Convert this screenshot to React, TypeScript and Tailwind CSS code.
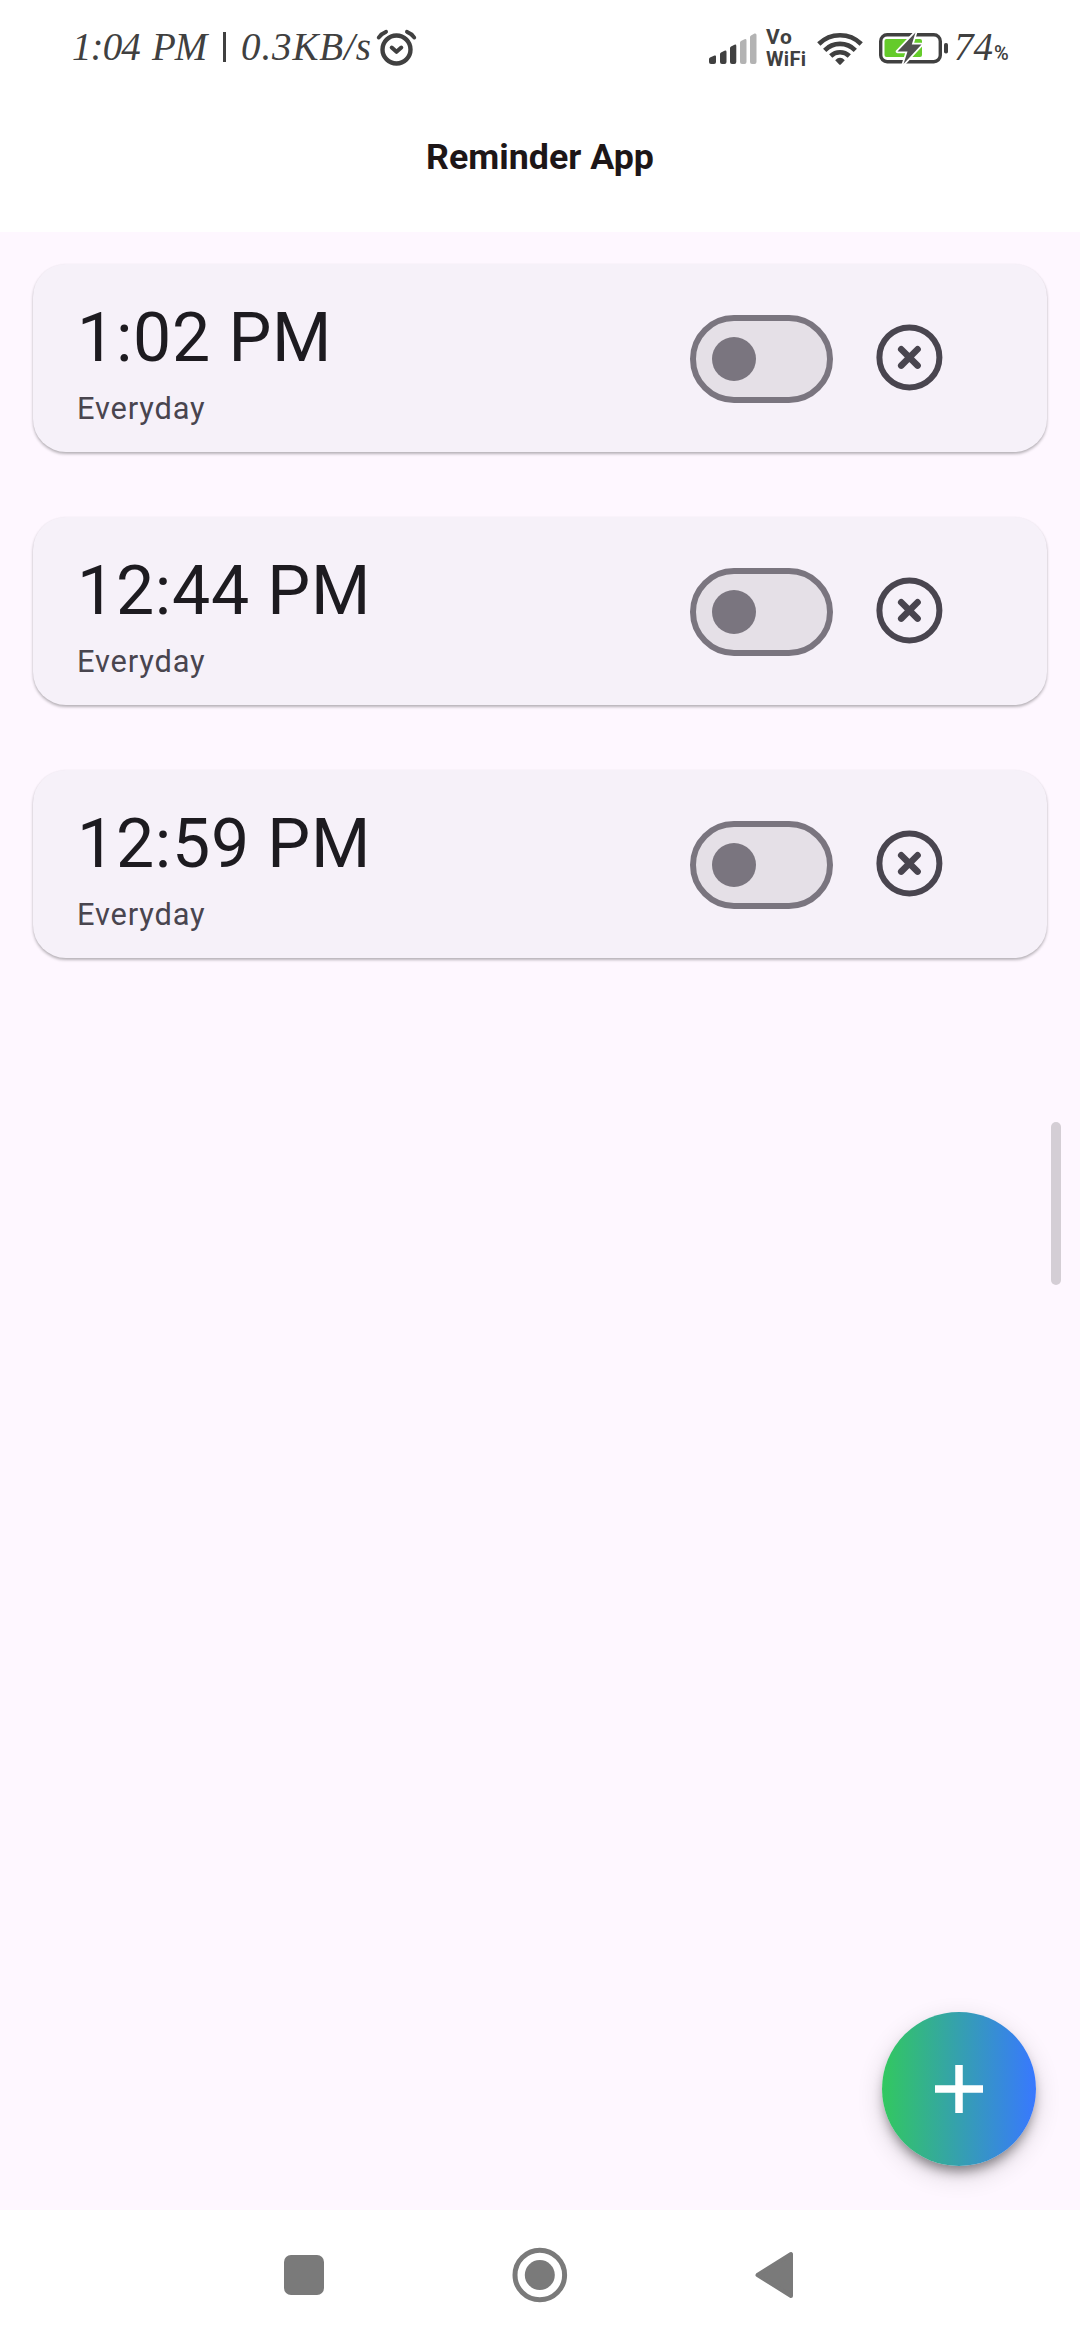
import React from "react";

const reminders = [
  { time: "1:02 PM", repeat: "Everyday" },
  { time: "12:44 PM", repeat: "Everyday" },
  { time: "12:59 PM", repeat: "Everyday" },
];

function AlarmIcon() {
  return (
    <svg className="mt-[27px] ml-[5px] h-[40px] w-[42px] shrink-0" viewBox="0 0 42 40" fill="none" stroke="#404040" strokeLinecap="round" strokeLinejoin="round">
      <circle cx="21.5" cy="22.5" r="14" strokeWidth="4.4" />
      <path d="M16.7 20.5 L21.5 24.8 L26.3 20.5" strokeWidth="4" />
      <path d="M3.800 10.500 Q6.500 6.500 11 4.800 M39.200 10.500 Q36.500 6.500 32 4.800" strokeWidth="4" />
    </svg>
  );
}

function SignalIcon() {
  return (
    <svg className="mt-[33px] h-[32px] w-[48px] shrink-0" viewBox="0 0 48 32">
      <g fill="#404040">
        <path d="M0 26 Q0 25 1 24.5 L5.5 22.5 Q7 22 7 23.5 V29 Q7 31 5 31 H2 Q0 31 0 29Z" />
        <path d="M11 21 Q11 20 12 19.5 L15.5 17.7 Q17.500 17 17.500 19 V29 Q17.500 31 15.500 31 H13 Q11 31 11 29Z" />
        <path d="M21 15 Q21 14 22 13.500 L25.500 11.700 Q27.300 11 27.300 13 V29 Q27.300 31 25.300 31 H23 Q21 31 21 29Z" />
      </g>
      <g fill="#b3b3b3">
        <path d="M31 9.500 Q31 8.500 32 8 L35.500 6.200 Q37.500 5.500 37.500 7.500 V29 Q37.500 31 35.500 31 H33 Q31 31 31 29Z" />
        <path d="M41 4 Q41 3 42 2.500 L45.500 .5 Q47.500 0 47.500 2 V29 Q47.500 31 45.500 31 H43 Q41 31 41 29Z" />
      </g>
    </svg>
  );
}

function VoWifi() {
  return (
    <div className="mt-[26px] ml-[9px] flex w-[43px] shrink-0 flex-col font-['Roboto',sans-serif] font-bold text-[#404040]">
      <span className="h-[22px] text-[21px] leading-[22px] tracking-[0.8px]">Vo</span>
      <span className="h-[22px] text-[20px] leading-[22px] tracking-[0.3px]">WiFi</span>
    </div>
  );
}

function WifiIcon() {
  return (
    <svg className="mt-[30px] ml-[7px] h-[36px] w-[48px] shrink-0" viewBox="0 0 48 36" fill="none" stroke="#404040" strokeWidth="4.600">
      <path d="M2.800 14 A30 30 0 0 1 45.200 14" />
      <path d="M8.700 20.300 A21.500 21.500 0 0 1 39.300 20.300" />
      <path d="M14.700 26 A13.500 13.500 0 0 1 33.300 26" />
      <path d="M19.200 30.300 Q24 25.400 28.800 30.300 L24.800 34.500 Q24 35.200 23.200 34.500Z" fill="#404040" stroke="none" />
    </svg>
  );
}

function BatteryIcon() {
  return (
    <svg className="mt-[31px] ml-[15px] h-[34px] w-[70px] shrink-0" viewBox="0 0 70 34">
      <rect x="1.700" y="3.700" width="59.600" height="27" rx="6.500" fill="none" stroke="#404040" strokeWidth="3.400" />
      <rect x="5.500" y="8" width="37.500" height="18" rx="2" fill="#65cb2b" />
      <path d="M36.500 1.500 L18.500 20.500 H28.500 L24.500 33 L42.500 13.500 H32.800 Z" fill="#505050" stroke="#fff" strokeWidth="3.500" strokeLinejoin="round" paintOrder="stroke" />
      <rect x="65" y="12" width="4" height="10.500" rx="1.800" fill="#404040" />
    </svg>
  );
}

function StatusBar() {
  return (
    <div className="flex h-[94px] shrink-0 items-start text-[#404040]">
      <div className="flex h-[94px] w-[300px] shrink-0 whitespace-nowrap pl-[72px] font-['Liberation_Serif',serif] text-[39px] leading-[94px] italic">
        <span className="w-[80px] shrink-0 tracking-[-0.9px]">1:04</span>
        <span className="w-[71px] shrink-0 tracking-[-1px]">PM</span>
        <span className="mt-[32px] mr-[15px] h-[30px] w-[3px] shrink-0 bg-[#404040]" />
        <span className="shrink-0 tracking-[0.9px]">0.3KB/s</span>
      </div>
      <div className="ml-[70px] flex">
        <AlarmIcon />
      </div>
      <div className="ml-auto flex pr-[66px]">
        <SignalIcon />
        <VoWifi />
        <WifiIcon />
        <BatteryIcon />
        <span className="ml-[5px] w-[37px] font-['Liberation_Serif',serif] text-[39px] leading-[94px] italic">74</span>
        <span className="mt-[6px] w-[23px] pl-[3px] font-['Roboto',sans-serif] text-[20px] leading-[94px] font-medium">%</span>
      </div>
    </div>
  );
}

function ReminderCard({ time, repeat }: { time: string; repeat: string }) {
  return (
    <li className="flex h-[188px] rounded-[33px] bg-[#f6f1f9] pl-[44px] shadow-[0_2px_3px_rgba(0,0,0,0.28),0_0_2px_rgba(0,0,0,0.04)]">
      <div className="flex w-[613px] flex-col pt-[34px]">
        <span className="h-[81px] text-[68px] leading-[81px] tracking-[0.690px] whitespace-nowrap text-[#1d1b20]">{time}</span>
        <span className="mt-[11px] text-[30.800px] leading-[38px] tracking-[0.850px] text-[#49454f]">{repeat}</span>
      </div>
      <button role="switch" aria-checked="false" aria-label="Toggle reminder" className="mt-[51px] flex h-[88px] w-[143px] items-center rounded-full border-[6px] border-[#7a757f] bg-[#e5e0e7] pl-[16px]">
        <span className="h-[44px] w-[44px] rounded-full bg-[#7a757f]" />
      </button>
      <button aria-label="Delete reminder" className="mt-[60px] ml-[43px] h-[67px] w-[67px]">
        <svg viewBox="0 0 67 67" fill="none" stroke="#49454f" strokeLinecap="round">
          <circle cx="33.400" cy="33.400" r="30" strokeWidth="6" />
          <path d="M25.200 25.200 L41.600 41.600 M41.600 25.200 L25.200 41.600" strokeWidth="6.500" />
        </svg>
      </button>
    </li>
  );
}

function NavBar() {
  return (
    <nav className="flex h-[130px] shrink-0 items-center bg-white pl-[284px]">
      <span className="h-[40px] w-[40px] rounded-[7px] bg-[#7a7a7a]" />
      <svg className="ml-[188px] h-[56px] w-[56px]" viewBox="0 0 56 56">
        <circle cx="27.800" cy="28" r="24.800" fill="none" stroke="#7a7a7a" strokeWidth="5" />
        <circle cx="27.800" cy="28" r="15" fill="#7a7a7a" />
      </svg>
      <svg className="ml-[187px] h-[48px] w-[39px]" viewBox="0 0 39 48">
        <path d="M2.500 24 L36 3 V45 Z" fill="#7a7a7a" stroke="#7a7a7a" strokeWidth="4" strokeLinejoin="round" />
      </svg>
    </nav>
  );
}

export default function App() {
  return (
    <div className="relative flex h-[2340px] w-[1080px] flex-col overflow-hidden bg-white font-['Roboto',sans-serif]">
      <StatusBar />
      <header className="flex h-[138px] shrink-0 justify-center pt-[42px]">
        <h1 className="text-[35.750px] leading-[42px] font-bold text-[#1d1617]">Reminder App</h1>
      </header>
      <main className="flex-1 bg-[#fef7ff] px-[33px] pt-[32px]">
        <ul className="flex flex-col gap-[65px]">
          {reminders.map((r) => (
            <ReminderCard key={r.time} {...r} />
          ))}
        </ul>
      </main>
      <NavBar />
      <div className="absolute top-[1122px] right-[19px] h-[163px] w-[10px] rounded-full bg-[#d4ced5]" />
      <button aria-label="Add reminder" className="absolute right-[44px] bottom-[174px] flex h-[154px] w-[154px] items-center justify-center rounded-full bg-linear-to-r/srgb from-[#32c85f] to-[#3878ff] shadow-[0_8px_12px_-3px_rgba(0,0,0,0.42),0_9px_26px_rgba(0,0,0,0.16)]">
        <svg className="h-[48px] w-[48px]" viewBox="0 0 48 48" fill="none" stroke="#fff" strokeWidth="7.500">
          <path d="M24 0 V48 M0 24 H48" />
        </svg>
      </button>
    </div>
  );
}
